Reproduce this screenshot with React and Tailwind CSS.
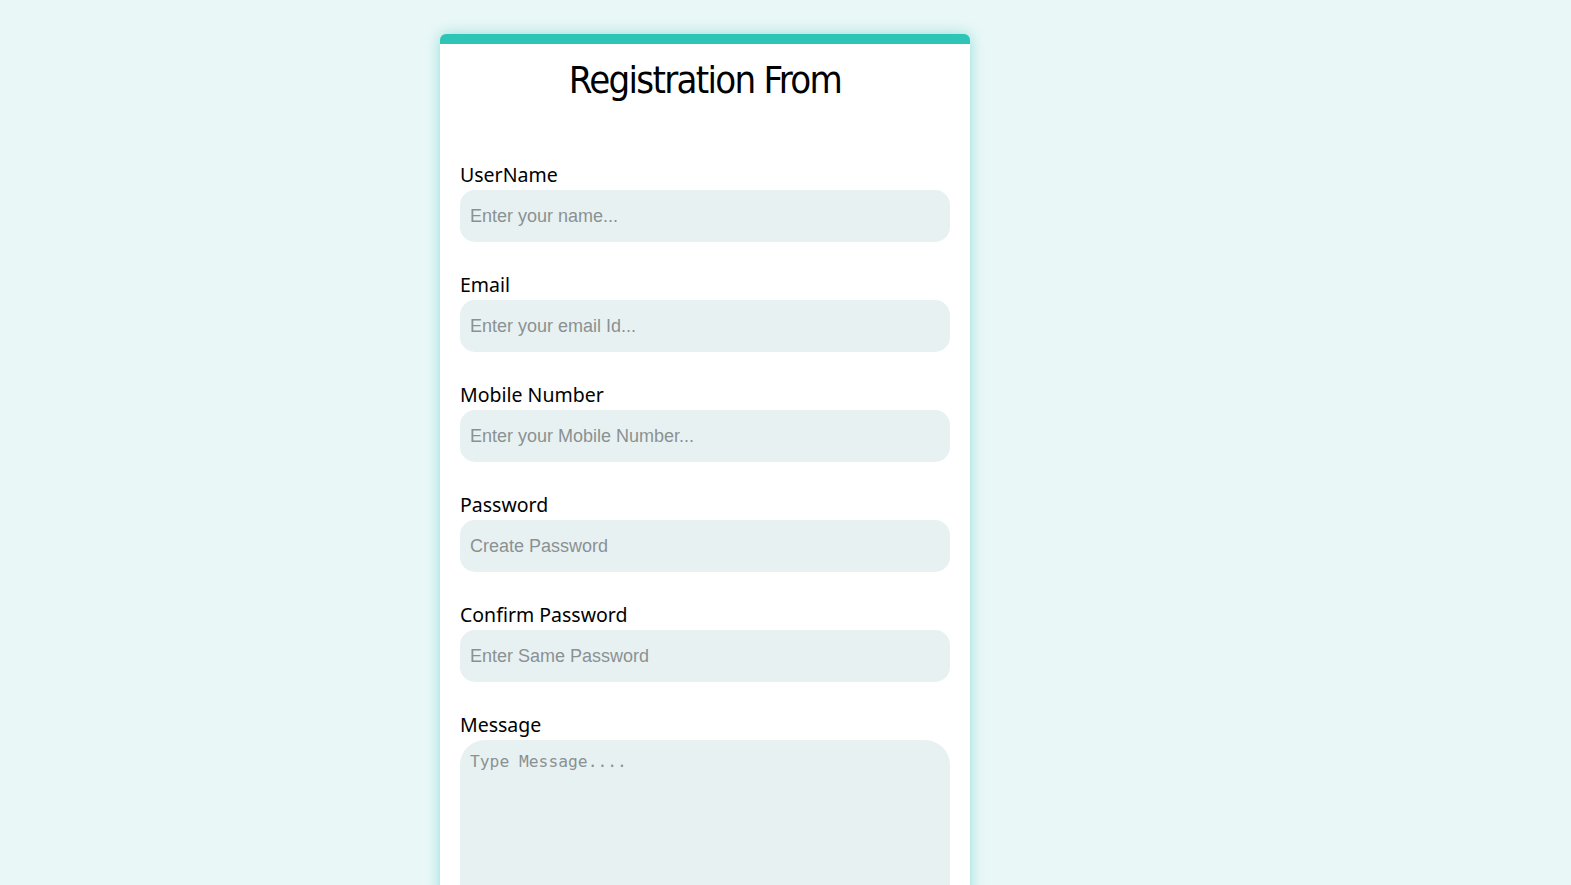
import { useState } from "react";

const fields = [
  { label: "UserName", type: "text", placeholder: "Enter your name..." },
  { label: "Email", type: "email", placeholder: "Enter your email Id..." },
  { label: "Mobile Number", type: "tel", placeholder: "Enter your Mobile Number..." },
  { label: "Password", type: "password", placeholder: "Create Password" },
  { label: "Confirm Password", type: "password", placeholder: "Enter Same Password" },
];

const App = () => {
  const [values, setValues] = useState({});
  const [message, setMessage] = useState("");

  return (
    <div className="min-h-screen bg-[#e9f7f7] pt-[34px]">
      <div className="ml-[440px] w-[530px] bg-white rounded-t-md border-t-[10px] border-[#2ec4b6] shadow-[0_0_14px_rgba(46,196,182,0.45)] px-5 pb-10">
        <h1 className="text-center text-[38px] leading-[72px] text-black font-['DejaVu_Sans_Condensed',sans-serif] font-extralight tracking-[-1.7px] mb-[47px]">
          Registration From
        </h1>
        <form onSubmit={(e) => e.preventDefault()}>
          {fields.map((f) => (
            <div key={f.label} className="mb-[31px]">
              <label className="block text-[19.5px] leading-[24px] pb-[3px] text-black font-['Noto_Sans',sans-serif]">
                {f.label}
              </label>
              <input
                type={f.type}
                placeholder={f.placeholder}
                value={values[f.label] || ""}
                onChange={(e) => setValues({ ...values, [f.label]: e.target.value })}
                className="w-full h-[52px] bg-[#e8f1f2] rounded-[15px] px-[10px] text-[18px] font-['Liberation_Sans',sans-serif] placeholder:text-[#8a9192] outline-none"
              />
            </div>
          ))}
          <div>
            <label className="block text-[19.5px] leading-[24px] pb-[3px] text-black font-['Noto_Sans',sans-serif]">
              Message
            </label>
            <textarea
              placeholder="Type Message...."
              value={message}
              onChange={(e) => setMessage(e.target.value)}
              className="w-full h-[200px] bg-[#e8f1f2] rounded-[25px] px-[10px] py-[10px] text-[16.3px] font-['DejaVu_Sans_Mono',monospace] placeholder:text-[#8a9192] outline-none resize-none"
            />
          </div>
        </form>
      </div>
    </div>
  );
};

export default App;
